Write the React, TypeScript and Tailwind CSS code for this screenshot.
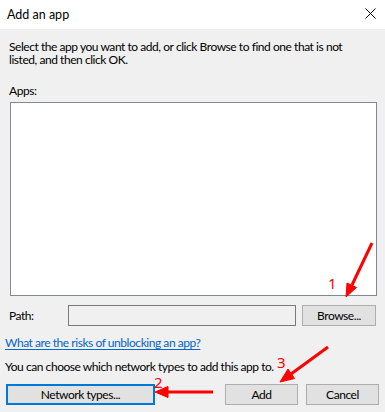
import React from "react";

export default function App() {
  return (
    <div className="relative w-[385px] h-[412px] overflow-hidden bg-[#f0f0f0] text-black text-[12px] leading-[13px] font-['Lato',sans-serif] whitespace-nowrap">
      <div className="h-[29px] bg-white flex items-center justify-between pl-[7px] pr-[9px]">
        <span className="text-[12.5px]">Add an app</span>
        <svg width="11" height="11" viewBox="0 0 11 11" className="mt-[-2px]">
          <path d="M0.5 0.5 L10.5 10.5 M10.5 0.5 L0.5 10.5" stroke="#000" strokeWidth="1" fill="none" />
        </svg>
      </div>

      <div className="pt-[11px] tracking-[-0.45px]">
        <p className="pl-[9px]">
          Select the app you want to add, or click Browse to find one that is not
          <br />
          listed, and then click OK.
        </p>
        <p className="mt-[18px] pl-[9px]">Apps:</p>
        <div className="mt-[5px] ml-[10px] w-[367px] h-[194px] border border-[#828790] bg-white" />

        <div className="mt-[9px] flex items-center pl-[9px]">
          <span className="w-[59px]">Path:</span>
          <div className="w-[228px] h-[21px] border border-[#7a7a7a] bg-[#f0f0f0]" />
          <button className="ml-[6px] w-[74px] h-[21px] border border-[#adadad] bg-[#e1e1e1] flex items-center justify-center">
            Browse...
          </button>
        </div>

        <p className="mt-[10px] pl-[5px]">
          <a className="text-[#0066cc] underline underline-offset-[2px]">What are the risks of unblocking an app?</a>
        </p>
        <p className="mt-[11px] pl-[5px]">You can choose which network types to add this app to.</p>

        <div className="mt-[11px] flex items-center px-[6px]">
          <button className="w-[149px] h-[21px] border-2 border-[#0078d7] bg-[#e1e1e1] flex items-center justify-center">
            Network types...
          </button>
          <div className="flex-1" />
          <button className="w-[73px] h-[21px] border border-[#adadad] bg-[#e1e1e1] flex items-center justify-center">
            Add
          </button>
          <button className="ml-[8px] w-[73px] h-[21px] border border-[#adadad] bg-[#e1e1e1] flex items-center justify-center">
            Cancel
          </button>
        </div>
      </div>

      <svg
        className="absolute inset-0 pointer-events-none"
        width="385"
        height="412"
        viewBox="0 0 385 412"
      >
        <g fill="#ff0000" stroke="#ff0000">
          <line x1="372" y1="243" x2="352" y2="285" strokeWidth="3" />
          <polygon points="346,297 356.5,287.5 347,283" strokeWidth="1" />
          <line x1="213" y1="392" x2="166" y2="392" strokeWidth="3" />
          <polygon points="155,392 168,386.5 168,397.5" strokeWidth="1" />
          <line x1="328" y1="347" x2="291" y2="374" strokeWidth="3" />
          <polygon points="280,382 294.5,378.5 288,369" strokeWidth="1" />
        </g>
        <g fill="#ff0000" fontSize="15" fontFamily="'Noto Sans', sans-serif">
          <text x="328" y="289">1</text>
          <text x="154" y="388">2</text>
          <text x="277" y="368">3</text>
        </g>
      </svg>
    </div>
  );
}
